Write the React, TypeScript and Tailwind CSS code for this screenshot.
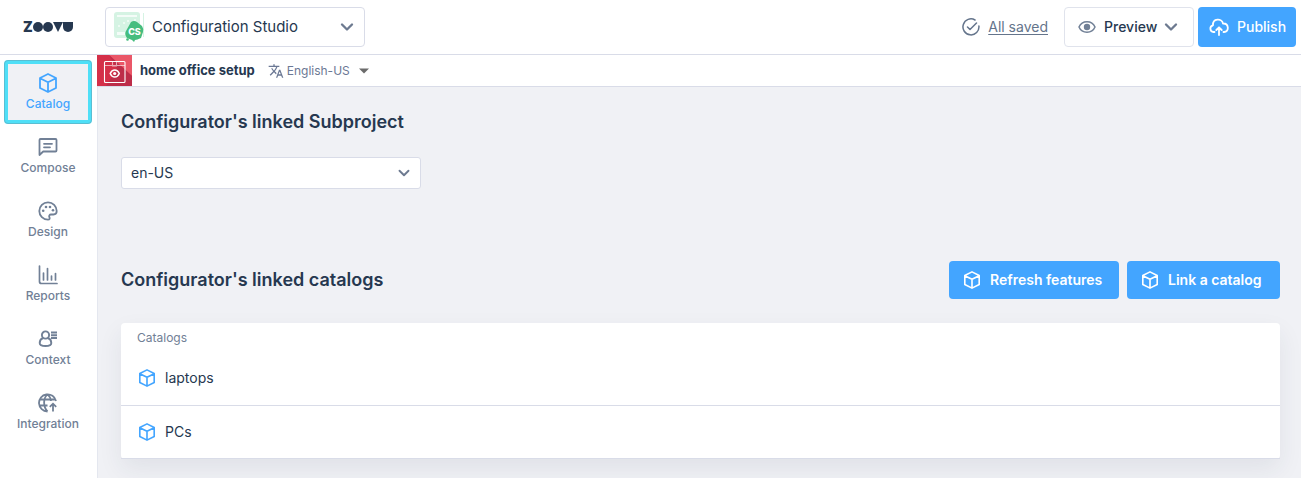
import React, { useState } from 'react';
import { ChevronDown } from 'lucide-react';
import { MdTranslate } from 'react-icons/md';

interface IconProps {
  className?: string;
}

const CubeIcon: React.FC<IconProps> = ({ className = 'size-5' }) => (
  <svg viewBox="0 0 20 20" fill="none" stroke="currentColor" strokeWidth="1.8" strokeLinejoin="round" className={className}>
    <path d="M10 1 18 5v10l-8 4-8-4V5ZM2 5.200 10 9.200l8-4M10 9.200V19" />
  </svg>
);

const ComposeIcon: React.FC<IconProps> = ({ className = 'size-5' }) => (
  <svg viewBox="0 0 20 20" fill="none" stroke="currentColor" strokeWidth="1.8" strokeLinejoin="round" strokeLinecap="round" className={className}>
    <path d="M2.5 2h15q1 0 1 1v10.5q0 1-1 1H5.2L1.5 18V3q0-1 1-1ZM6 6.800h8M6 10.300h6" />
  </svg>
);

const PaletteIcon: React.FC<IconProps> = ({ className = 'size-5' }) => (
  <svg viewBox="0 0 20 20" fill="none" stroke="currentColor" strokeWidth="1.8" className={className}>
    <path d="M10 1.300a8.700 8.700 0 1 0 0 17.400c1.700 0 2-1.400 1.400-2.500-.7-1.300.1-2.700 1.600-2.700h2.500c2 0 3.200-1.600 3.200-3.500 0-4.900-3.900-8.700-8.700-8.700Z" />
    <g fill="currentColor" stroke="none">
      <circle cx="5.2" cy="9.800" r="1.300" />
      <circle cx="8" cy="6" r="1.300" />
      <circle cx="12" cy="6" r="1.300" />
      <circle cx="15" cy="9.300" r="1.300" />
    </g>
  </svg>
);

const ReportsIcon: React.FC<IconProps> = ({ className = 'size-5' }) => (
  <svg viewBox="0 0 20 20" fill="none" stroke="currentColor" strokeWidth="1.7" strokeLinecap="round" className={className}>
    <path d="M1.500 1v15.500q0 2 2 2H19M5.500 8v7M9.500 3.500V15M13.500 11v4M17.500 8.500V15" />
  </svg>
);

const ContextIcon: React.FC<IconProps> = ({ className = 'size-5' }) => (
  <svg viewBox="0 0 20 20" fill="none" stroke="currentColor" strokeWidth="1.9" className={className}>
    <circle cx="7.500" cy="6" r="3.600" />
    <path d="M5 9C2.500 10 1.700 12 1.700 14q0 3 5.800 3t5.800-3c0-2-.8-4-3.300-5M13 3.500h6M13 6.200h6M13 9h6" />
  </svg>
);

const IntegrationIcon: React.FC<IconProps> = ({ className = 'size-5' }) => (
  <svg viewBox="0 0 20 20" fill="none" stroke="currentColor" strokeWidth="1.8" className={className}>
    <path d="M9.500 18.500A8.600 8.600 0 1 1 18 8M9.500 1.400C5 5 5 14 9.500 18.500M9.500 1.400c2 1.600 3.200 4 3.400 6.600M2 6.500h15.500M1.500 12.500h8M15 18.500V11M11.800 13.800 15 10.700l3.200 3.100" />
  </svg>
);

const EyeIcon: React.FC<IconProps> = ({ className }) => (
  <svg viewBox="0 0 18 14" fill="none" stroke="currentColor" strokeWidth="1.5" className={className}>
    <path d="M1 7C4 0 14 0 17 7 14 14 4 14 1 7Z" />
    <circle cx="9" cy="7" r="3.200" fill="currentColor" stroke="none" />
  </svg>
);

const CloudIcon: React.FC<IconProps> = ({ className }) => (
  <svg viewBox="0 0 20 18" fill="none" stroke="currentColor" strokeWidth="1.8" strokeLinecap="round" strokeLinejoin="round" className={className}>
    <path d="M5.500 14H4.500A3.400 3.400 0 0 1 4 7.300C3.500 0 13 0 14 5.500c6-.3 6.500 8.500 1 8.500h-.5M10 17V9.500M7.300 12 10 9.300l2.700 2.700" />
  </svg>
);

const SavedIcon: React.FC<IconProps> = ({ className }) => (
  <svg viewBox="0 0 18 18" fill="none" stroke="currentColor" strokeWidth="1.5" strokeLinecap="round" strokeLinejoin="round" className={className}>
    <path d="M13 2A8 8 0 1 0 16.900 8M5.500 9l2.500 2.500L14.500 5" />
  </svg>
);

const CaretIcon: React.FC<IconProps> = ({ className }) => (
  <svg viewBox="0 0 10 6" fill="currentColor" className={className}>
    <path d="M0 .5h10L5 5.500Z" />
  </svg>
);

const StudioLogo: React.FC<IconProps> = ({ className }) => (
  <svg viewBox="0 0 32 32" className={className}>
    <rect x="1" y="1" width="26" height="26" rx="3" fill="#d5f3e3" />
    <g fill="#f4fcf8">
      <rect x="4" y="4" width="20" height="2" />
      <rect x="4" y="21" width="10" height="3" />
      <circle cx="6" cy="15" r="1" />
      <circle cx="11" cy="12" r="1" />
      <circle cx="15" cy="10" r="1" />
      <circle cx="22" cy="9" r="1" />
    </g>
    <path d="M30.500 2v24" stroke="#d5f3e3" />
    <path d="M18 11q3-2 6 0l5 4q2 3 1 6l-2 6q-4 2-6 2l-1 2-2-2-5-2q-3-4-1-7Z" fill="#45bd7e" />
    <circle cx="14.500" cy="28.500" r="1.300" fill="#45bd7e" />
    <text x="21.500" y="23.500" textAnchor="middle" fontSize="9" fontWeight="800" fill="#fff">CS</text>
  </svg>
);

const ProjectImage: React.FC<IconProps> = ({ className }) => (
  <svg viewBox="0 0 35 31" className={className}>
    <rect width="35" height="31" fill="#d42f48" />
    <path d="M12 0h23v21Z" fill="#ea5768" />
    <path d="M12 0 35 21v10H9L20 14Z" fill="#bd2d49" />
    <g fill="none" stroke="#fff" strokeWidth="1.1">
      <rect x="7.500" y="6.500" width="20.500" height="21" rx="1" />
      <path d="M7.500 10.500h20.500M15.500 6.500v4.500h4v-4.500" opacity=".6" />
      <path d="M13.200 18.500c2-4.700 7.100-4.700 9.100 0-2 4.700-7.100 4.700-9.100 0Z" strokeWidth="1.500" />
    </g>
    <circle cx="17.700" cy="18.500" r="1.600" fill="#fff" />
  </svg>
);

const BrandLogo: React.FC = () => (
  <a href="#" aria-label="Home" className="flex h-[10px] items-center text-[#263850]">
    <span className="w-[10px] text-sm leading-none font-black">Z</span>
    <span className="size-[10px] rounded-full bg-current" />
    <span className="size-[10px] rounded-full bg-current" />
    <span className="h-[10px] w-[10px] bg-current [clip-path:polygon(0_0,100%_0,50%_100%)]" />
    <span className="h-[10px] w-[10px] rounded-b-[5px] bg-current" />
  </a>
);

const navItems = [
  { label: 'Catalog', icon: CubeIcon },
  { label: 'Compose', icon: ComposeIcon },
  { label: 'Design', icon: PaletteIcon },
  { label: 'Reports', icon: ReportsIcon },
  { label: 'Context', icon: ContextIcon },
  { label: 'Integration', icon: IntegrationIcon },
];

const catalogs = ['laptops', 'PCs'];

const App: React.FC = () => {
  const [active, setActive] = useState('Catalog');

  return (
    <div className="flex min-h-screen flex-col bg-white font-['Inter',sans-serif] text-sm text-[#263850]">
      <header className="flex h-[55px] items-center border-b border-[#d9dce8] pr-[5px]">
        <div className="flex w-[105px] shrink-0 pl-[23px]">
          <BrandLogo />
        </div>
        <div className="relative w-[260px]">
          <StudioLogo className="pointer-events-none absolute top-1 left-2 size-8" />
          <select
            aria-label="Studio"
            className="h-10 w-full appearance-none rounded border border-[#d9dce8] bg-white pr-10 pl-[46px] text-[15px]"
          >
            <option>Configuration Studio</option>
          </select>
          <ChevronDown size={20} strokeWidth={2.8} className="pointer-events-none absolute top-[10px] right-2 text-[#6d7a90]" />
        </div>

        <div className="ml-auto flex items-center">
          <SavedIcon className="size-[18px] text-[#64748b]" />
          <a href="#" className="mr-4 ml-2 text-[#64748b] underline underline-offset-2">All saved</a>
          <button className="mr-1 flex h-10 w-[130px] items-center rounded border border-[#e0e3ec] pl-[13px] font-medium">
            <EyeIcon className="mr-2 h-[14px] w-[18px] text-[#718096]" />
            Preview
            <ChevronDown size={20} strokeWidth={2.8} className="ml-1 text-[#6d7a90]" />
          </button>
          <button className="flex h-10 w-[98px] items-center gap-2 rounded bg-[#43a5ff] pl-[11px] font-medium text-white">
            <CloudIcon className="h-[18px] w-5 shrink-0" />
            Publish
          </button>
        </div>
      </header>

      <div className="flex grow">
        <nav className="w-[97px] shrink-0 pt-[5px] pr-[5px] pl-1">
          {navItems.map(({ label, icon: Icon }) => (
            <button
              key={label}
              onClick={() => setActive(label)}
              className={`flex h-16 w-full flex-col items-center justify-center gap-[3px] rounded text-xs leading-4 font-medium ${
                active === label
                  ? 'border-4 border-[#4fdff7] bg-[#f0f1f5] text-[#43a5ff] outline -outline-offset-1 outline-[#6b8c9a]/40'
                  : 'text-[#718096]'
              }`}
            >
              <Icon />
              {label}
            </button>
          ))}
        </nav>

        <div className="flex min-w-0 grow flex-col bg-[#f0f1f5]">
          <div className="flex h-8 items-center border-b border-[#d9dce8] bg-white">
            <ProjectImage className="h-[31px] w-[35px]" />
            <span className="ml-2 text-[13px] font-bold">home office setup</span>
            <MdTranslate size={16} className="ml-[13px] text-[#6b7894]" />
            <div className="relative ml-[3px] flex items-center">
              <select aria-label="Language" className="w-[82px] appearance-none text-xs text-[#6b7894]">
                <option>English-US</option>
              </select>
              <CaretIcon className="pointer-events-none absolute right-0 h-[6px] w-[10px] text-[#6b6b6b]" />
            </div>
          </div>

          <main className="grow border-l border-[#e4e7ef] pt-[21px] pr-[21px] pb-5 pl-[23px]">
            <h2 className="text-lg leading-7 font-semibold">
              <label htmlFor="subproject">Configurator's linked Subproject</label>
            </h2>
            <div className="relative mt-[21px] w-[300px]">
              <select
                id="subproject"
                className="h-8 w-full appearance-none rounded-[3px] border border-[#d9dce8] bg-white px-[9px]"
              >
                <option>en-US</option>
              </select>
              <ChevronDown size={18} strokeWidth={2.5} className="pointer-events-none absolute top-[7px] right-2 text-[#6d7a90]" />
            </div>

            <div className="mt-[72px] flex items-center">
              <h2 className="grow text-lg leading-7 font-semibold">Configurator's linked catalogs</h2>
              <div className="flex gap-2 font-semibold text-white">
                <button className="flex h-[38px] w-[170px] items-center gap-[9px] rounded bg-[#43a5ff] pl-[14px]">
                  <CubeIcon className="size-[18px]" />
                  Refresh features
                </button>
                <button className="flex h-[38px] w-[153px] items-center gap-[9px] rounded bg-[#43a5ff] pl-[14px]">
                  <CubeIcon className="size-[18px]" />
                  Link a catalog
                </button>
              </div>
            </div>

            <div className="mt-6 rounded bg-white shadow-[0_10px_24px_rgba(38,56,80,0.08)]">
              <table className="w-full text-left">
                <thead>
                  <tr className="h-[29px]">
                    <th className="px-4 text-xs font-normal text-[#718096]">Catalogs</th>
                  </tr>
                </thead>
                <tbody>
                  {catalogs.map((name) => (
                    <tr key={name} className="h-[53px] border-b border-[#d9dce8]">
                      <td className="px-[17px]">
                        <div className="flex items-center gap-[9px]">
                          <CubeIcon className="size-[18px] text-[#43a5ff]" />
                          {name}
                        </div>
                      </td>
                    </tr>
                  ))}
                </tbody>
              </table>
            </div>
          </main>
        </div>
      </div>
    </div>
  );
};

export default App;
